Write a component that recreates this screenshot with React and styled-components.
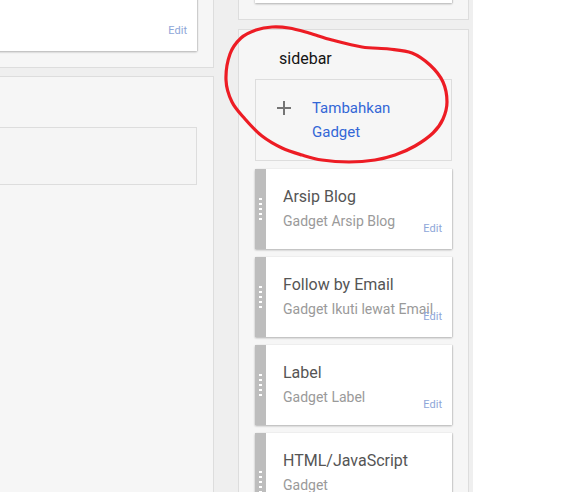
import React from "react";
import styled, { createGlobalStyle } from "styled-components";

const GlobalStyle = createGlobalStyle`
  html, body { margin: 0; padding: 0; background: #ffffff; }
  body { font-family: Roboto, "Liberation Sans", Arial, sans-serif; }
  * { box-sizing: border-box; }
`;

const Page = styled.div`
  position: relative;
  width: 562px;
  height: 492px;
  overflow: hidden;
  display: flex;
  background: #ffffff;
`;

const Canvas = styled.div`
  width: 473px;
  height: 492px;
  background: #efefef;
  display: grid;
  grid-template-columns: 214px 231px;
  column-gap: 24px;
  align-items: start;
`;

const Column = styled.div`
  display: flex;
  flex-direction: column;
  gap: ${(p) => p.$gap}px;
  margin-top: ${(p) => p.$offset}px;
  margin-left: ${(p) => p.$shift || 0}px;
`;

const Panel = styled.div`
  background: #f6f6f6;
  border: 1px solid #dddddd;
  padding: ${(p) => p.$pad};
  min-height: ${(p) => p.$minH || 0}px;
`;

const WidgetCard = styled.div`
  position: relative;
  height: ${(p) => p.$h}px;
  background: #ffffff;
  box-shadow: 0 1px 2px rgba(0, 0, 0, 0.28), 1px 0 1px rgba(0, 0, 0, 0.08);
`;

const EditLink = styled.span`
  position: absolute;
  right: 10px;
  bottom: 14px;
  font-size: 11px;
  line-height: 13px;
  color: #8ea6d8;
`;

const InputBox = styled.div`
  height: 58px;
  border: 1px solid #dddddd;
  background: #f5f5f5;
`;

const SectionTitle = styled.div`
  font-size: 16px;
  line-height: 20px;
  color: #141414;
  margin: 0 0 10px 24px;
`;

const AddBox = styled.div`
  display: flex;
  align-items: flex-start;
  border: 1px solid #dddddd;
  background: #f6f6f6;
  padding: 16px 16px 16px 21px;
`;

const PlusIcon = styled.svg`
  flex: none;
  width: 14px;
  height: 14px;
  margin-top: 5px;
  margin-right: 21px;
`;

const AddText = styled.span`
  width: 110px;
  font-size: 15px;
  line-height: 24px;
  color: #3367d6;
`;

const CardList = styled.div`
  display: flex;
  flex-direction: column;
  gap: 8px;
  margin-top: 8px;
`;

const Gadget = styled.div`
  position: relative;
  display: flex;
  min-height: 80px;
  background: #ffffff;
  box-shadow: 0 1px 2px rgba(0, 0, 0, 0.28), 1px 0 1px rgba(0, 0, 0, 0.08);
`;

const Handle = styled.div`
  flex: none;
  width: 11px;
  background: #bdbdbd;
  display: flex;
  flex-direction: column;
  align-items: center;
  justify-content: center;
  gap: 3px;
`;

const Dot = styled.span`
  width: 3px;
  height: 2px;
  background: #ffffff;
`;

const GadgetBody = styled.div`
  padding: 18px 0 19px 17px;
  white-space: ${(p) => (p.$wrap ? "normal" : "nowrap")};
  width: ${(p) => (p.$wrap ? "150px" : "auto")};
`;

const GadgetTitle = styled.div`
  font-size: 16px;
  line-height: 20px;
  color: #555555;
  white-space: nowrap;
`;

const GadgetSub = styled.div`
  margin-top: 5px;
  font-size: 14px;
  line-height: 18px;
  color: #9a9a9a;
`;

const Annotation = styled.svg`
  position: absolute;
  left: 0;
  top: 0;
  width: 562px;
  height: 492px;
  pointer-events: none;
`;

const redPoints = [
  [226, 80], [230, 54], [241, 38], [256, 30], [272, 27], [289, 28],
  [309, 33], [332, 40], [362, 47], [389, 49], [412, 53], [430, 65],
  [443, 82], [447, 102], [443, 119], [433, 133], [415, 146], [395, 155],
  [375, 160], [349, 162], [322, 160], [302, 155], [282, 148], [262, 136],
  [245, 119], [232, 102],
];

function closedSpline(pts) {
  const n = pts.length;
  let d = `M${pts[0][0]},${pts[0][1]}`;
  for (let i = 0; i < n; i++) {
    const p0 = pts[(i - 1 + n) % n];
    const p1 = pts[i];
    const p2 = pts[(i + 1) % n];
    const p3 = pts[(i + 2) % n];
    const c1x = p1[0] + (p2[0] - p0[0]) / 6;
    const c1y = p1[1] + (p2[1] - p0[1]) / 6;
    const c2x = p2[0] - (p3[0] - p1[0]) / 6;
    const c2y = p2[1] - (p3[1] - p1[1]) / 6;
    d += ` C${c1x.toFixed(1)},${c1y.toFixed(1)} ${c2x.toFixed(1)},${c2y.toFixed(1)} ${p2[0]},${p2[1]}`;
  }
  return d + " Z";
}

const gadgets = [
  { title: "Arsip Blog", sub: "Gadget Arsip Blog" },
  { title: "Follow by Email", sub: "Gadget Ikuti lewat Email" },
  { title: "Label", sub: "Gadget Label" },
  { title: "HTML/JavaScript", sub: "Gadget HTML/JavaScript", wrap: true },
];

function GadgetCard({ title, sub, wrap }) {
  return (
    <Gadget>
      <Handle>
        {[0, 1, 2, 3, 4].map((i) => (
          <Dot key={i} />
        ))}
      </Handle>
      <GadgetBody $wrap={wrap}>
        <GadgetTitle>{title}</GadgetTitle>
        <GadgetSub>{sub}</GadgetSub>
      </GadgetBody>
      <EditLink>Edit</EditLink>
    </Gadget>
  );
}

export default function App() {
  return (
    <>
      <GlobalStyle />
      <Page>
        <Canvas>
          <Column $gap={8} $offset={-66} $shift={-30}>
            <Panel $pad="16px">
              <WidgetCard $h={100}>
                <EditLink>Edit</EditLink>
              </WidgetCard>
            </Panel>
            <Panel $pad="50px 16px 0 16px" $minH={500}>
              <InputBox />
            </Panel>
          </Column>
          <Column $gap={9} $offset={-94}>
            <Panel $pad="16px">
              <WidgetCard $h={80} />
            </Panel>
            <Panel $pad="19px 16px 16px 16px" $minH={520}>
              <SectionTitle>sidebar</SectionTitle>
              <AddBox>
                <PlusIcon viewBox="0 0 14 14">
                  <path d="M7 0v14M0 7h14" stroke="#757575" strokeWidth="2" />
                </PlusIcon>
                <AddText>Tambahkan Gadget</AddText>
              </AddBox>
              <CardList>
                {gadgets.map((g) => (
                  <GadgetCard key={g.title} {...g} />
                ))}
              </CardList>
            </Panel>
          </Column>
        </Canvas>
        <Annotation viewBox="0 0 562 492">
          <path
            d={closedSpline(redPoints)}
            fill="none"
            stroke="#ed1c24"
            strokeWidth="3.2"
            strokeLinejoin="round"
          />
        </Annotation>
      </Page>
    </>
  );
}
